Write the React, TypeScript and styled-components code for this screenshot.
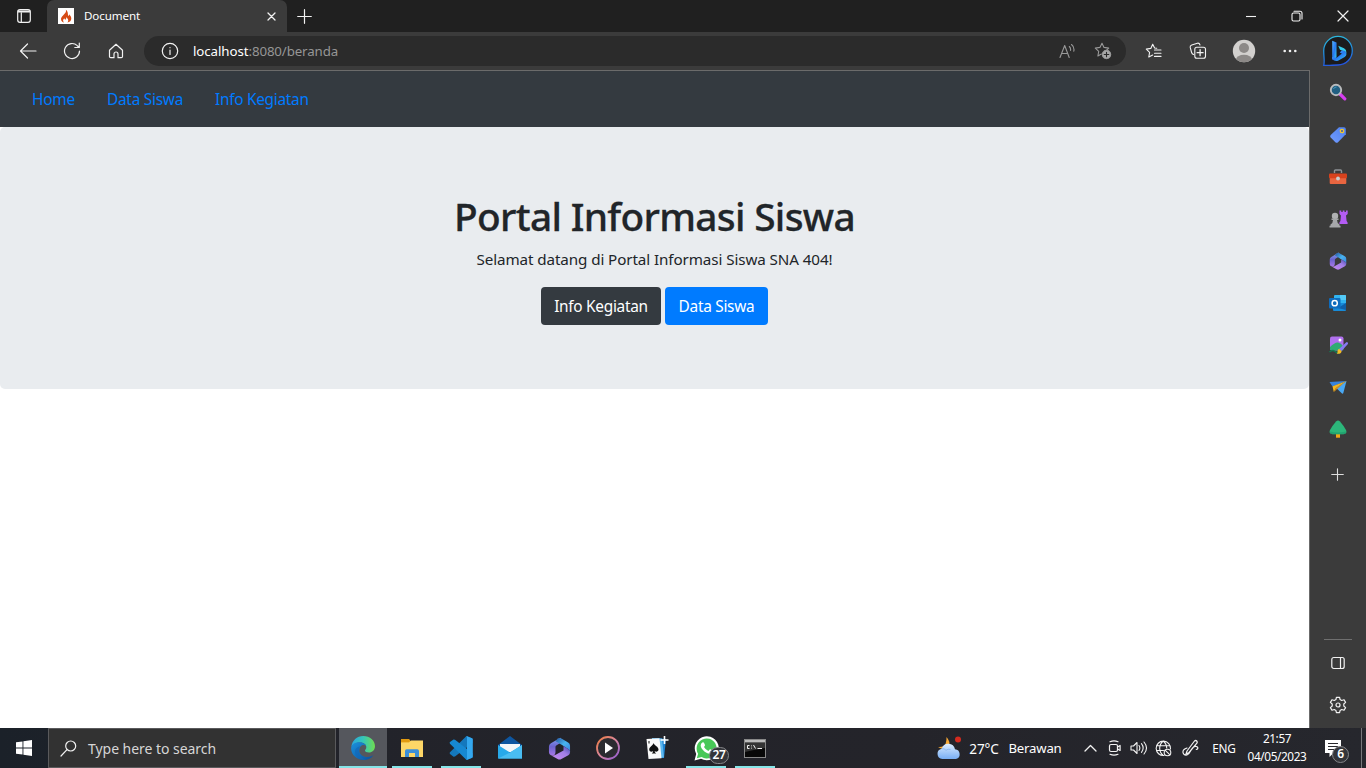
import React from 'react';
import styled, { createGlobalStyle, css } from 'styled-components';

const GlobalStyle = createGlobalStyle`
  *, *::before, *::after { box-sizing: border-box; }
  html, body { margin: 0; padding: 0; overflow: hidden; }
  body { font-family: "Noto Sans", "Open Sans", sans-serif; }
  svg { display: block; flex: none; }
`;

const Desktop = styled.div`
  width: 1366px;
  height: 768px;
  display: flex;
  flex-direction: column;
  background: #3b3b3b;
  overflow: hidden;
`;

const Label = styled.span<{ $size: number; $spacing?: number; $color?: string }>`
  font-size: ${p => p.$size}px;
  letter-spacing: ${p => p.$spacing ?? 0}px;
  color: ${p => p.$color ?? '#ffffff'};
  white-space: nowrap;
`;

/* Browser window */

const TitleBar = styled.header`
  height: 32px;
  flex: none;
  display: flex;
  align-items: center;
  background: #202020;
`;

const Slot = styled.div<{ $w: number }>`
  width: ${p => p.$w}px;
  height: 100%;
  flex: none;
  display: flex;
  align-items: center;
  justify-content: center;
`;

const Tab = styled.div`
  width: 240px;
  height: 32px;
  flex: none;
  display: flex;
  align-items: center;
  padding: 0 10px 0 11px;
  background: #3b3b3b;
  border-radius: 7px 7px 0 0;
`;

const TabTitle = styled(Label)`
  flex: 1;
  padding: 0 0 2px 10px;
`;

const Host = styled(Label)`
  margin-left: 5px;
`;

const Spacer = styled.div`
  flex: 1;
`;

const Toolbar = styled.div`
  height: 38px;
  flex: none;
  display: flex;
  align-items: center;
  padding-left: 6px;
  background: #3b3b3b;
`;

const AddressBar = styled.div`
  width: 982px;
  height: 30px;
  flex: none;
  display: flex;
  align-items: center;
  padding: 0 5px 0 8px;
  margin-left: 6px;
  border-radius: 15px;
  background: #2b2b2b;
`;

const Body = styled.div`
  height: 658px;
  flex: none;
  display: flex;
`;

const Page = styled.main`
  width: 1310px;
  flex: none;
  border-top: 1px solid #6b6b6b;
  border-right: 1px solid #6b6b6b;
  background: #ffffff;
`;

const Navbar = styled.nav`
  height: 56px;
  display: flex;
  align-items: center;
  gap: 32px;
  padding: 2px 32px 0 32px;
  background: #343a40;
`;

const NavLink = styled.a<{ $w: number; $spacing: number }>`
  width: ${p => p.$w}px;
  font-size: 15.4px;
  letter-spacing: ${p => p.$spacing}px;
  line-height: 24px;
  color: #007bff;
  white-space: nowrap;
`;

const Jumbotron = styled.section`
  height: 262px;
  display: flex;
  flex-direction: column;
  align-items: center;
  padding-top: 64px;
  border-radius: 5px;
  background: #e9ecef;
`;

const Heading = styled.h1`
  margin: 0 0 8px;
  font-size: 38.8px;
  line-height: 50px;
  height: 48px;
  font-weight: 500;
  letter-spacing: -0.68px;
  color: #212529;
  -webkit-text-stroke: 0.3px #212529;
  white-space: nowrap;
`;

const Lead = styled.p`
  margin: 0 0 16px;
  font-size: 15.2px;
  line-height: 25px;
  height: 24px;
  letter-spacing: -0.09px;
  color: #212529;
  white-space: nowrap;
`;

const Buttons = styled.div`
  display: flex;
  gap: 4px;
`;

const Button = styled.button<{ $w: number; $bg: string }>`
  width: ${p => p.$w}px;
  height: 38px;
  padding: 0;
  border: 0;
  border-radius: 4px;
  background: ${p => p.$bg};
  color: #ffffff;
  font: 400 15.4px "Noto Sans", "Open Sans", sans-serif;
  letter-spacing: -0.28px;
  white-space: nowrap;
`;

const Sidebar = styled.aside`
  width: 56px;
  flex: none;
  display: flex;
  flex-direction: column;
  align-items: center;
  padding-right: 1px;
  background: #3b3b3b;
`;

const SideItem = styled.div<{ $h?: number }>`
  height: ${p => p.$h ?? 42}px;
  flex: none;
  display: flex;
  align-items: center;
  justify-content: center;
`;

const Divider = styled.div`
  width: 28px;
  height: 1px;
  background: #6f6f6f;
  margin-bottom: 2px;
`;

/* Taskbar */

const Taskbar = styled.footer`
  height: 40px;
  flex: none;
  display: flex;
  align-items: center;
  background: linear-gradient(90deg, #1b2129 0, #22232a 340px, #24242a 900px, #26272d 100%);
`;

const SearchBox = styled.div`
  width: 288px;
  height: 40px;
  flex: none;
  display: flex;
  align-items: center;
  gap: 11px;
  padding-left: 11px;
  margin-right: 3px;
  border: 1px solid #5a5a5c;
  background: #323232;
`;

const TaskButton = styled.div<{ $open?: boolean; $active?: boolean }>`
  position: relative;
  width: 49px;
  height: 40px;
  flex: none;
  display: flex;
  align-items: center;
  justify-content: center;
  padding-right: 1px;
  ${p => p.$active && css`
    background: linear-gradient(90deg, #55575d 48px, transparent 48px);
  `}
  &::after {
    content: '';
    display: ${p => (p.$open || p.$active ? 'block' : 'none')};
    position: absolute;
    bottom: 0;
    left: ${p => (p.$active ? 0 : 4)}px;
    width: ${p => (p.$active ? 48 : 40)}px;
    height: 2px;
    background: #85e5e8;
  }
`;

const Badge = styled.span<{ $w: number; $left: number; $top: number }>`
  position: absolute;
  left: ${p => p.$left}px;
  top: ${p => p.$top}px;
  width: ${p => p.$w}px;
  height: 17px;
  border: 1px solid #85868a;
  border-radius: 9px;
  background: #34353a;
  color: #ffffff;
  font-size: 12px;
  font-weight: 600;
  letter-spacing: -0.3px;
  line-height: 14px;
  text-align: center;
`;

const Clock = styled.div`
  width: 74px;
  flex: none;
  display: flex;
  flex-direction: column;
  align-items: center;
  line-height: 18px;
  padding: 0 2px 2px 0;
`;

const Notifications = styled.div`
  position: relative;
  width: 46px;
  height: 40px;
  flex: none;
  display: flex;
  align-items: center;
  padding-left: 10px;
`;

const PeekLine = styled.div`
  width: 1px;
  height: 40px;
  background: #77787b;
  margin-right: 4px;
`;

/* Line icons share one frame; shapes use their pixel size as the view box. */
const Line = ({ w = 16, h = w, c = '#f2f2f2', s = 1.1, children }: {
  w?: number; h?: number; c?: string; s?: number; children: React.ReactNode;
}) => (
  <svg width={w} height={h} viewBox={`0 0 ${w} ${h}`} fill="none" stroke={c} strokeWidth={s}
    strokeLinecap="round" strokeLinejoin="round">{children}</svg>
);

const Art = ({ w = 18, h = w, children }: { w?: number; h?: number; children: React.ReactNode }) => (
  <svg width={w} height={h} viewBox={`0 0 ${w} ${h}`}>{children}</svg>
);

const Microsoft365 = ({ size, id }: { size: number; id: string }) => (
  <svg width={size} height={size} viewBox="0 0 24 24">
    <defs>
      <linearGradient id={`${id}a`} x1="0" y1="0" x2="0" y2="1">
        <stop offset="0" stopColor="#7fa3f2" /><stop offset=".5" stopColor="#6c63cf" /><stop offset="1" stopColor="#a678e6" />
      </linearGradient>
      <linearGradient id={`${id}b`} x1="0" y1="0" x2="1" y2="1">
        <stop offset="0" stopColor="#27549f" /><stop offset=".5" stopColor="#48b4f0" /><stop offset="1" stopColor="#3b82dd" />
      </linearGradient>
      <linearGradient id={`${id}c`} x1="0" y1="1" x2="1" y2="0">
        <stop offset="0" stopColor="#c98bf0" /><stop offset=".6" stopColor="#a27fe8" /><stop offset="1" stopColor="#3f4bab" />
      </linearGradient>
    </defs>
    <path d="M13 .8 3 6.500Q1 7.700 1 10v6q0 2.200 2 3l1.500.4q3 .2 3.300-3.400v-5.500q0-1.200 1.200-2L15 5Z" fill={`url(#${id}a)`} />
    <path d="M10 1.600q2-1.200 4 0L21 5.700q2 1.200 2 3.300v6.500q0-1.800-2-3l-4.800-3q-1-.7-2.500-1.600L8 4.500Z" fill={`url(#${id}b)`} />
    <path d="M23 14.500V16q0 2-1.800 3L14 23q-2 1.200-4 0l-6.500-3.700q2.500.5 5-1L16.200 14v-4.500L21 12.500q1.700 1 2 2Z" fill={`url(#${id}c)`} />
  </svg>
);

const EdgeLogo = () => (
  <Art w={24}>
    <defs>
      <linearGradient id="edgeTop" x1="0" y1=".4" x2="1" y2=".4">
        <stop offset="0" stopColor="#2aa5e0" /><stop offset=".5" stopColor="#35c6b8" /><stop offset="1" stopColor="#6fdd50" />
      </linearGradient>
      <linearGradient id="edgeLow" x1="0" y1="0" x2="1" y2="1">
        <stop offset="0" stopColor="#1b91dd" /><stop offset="1" stopColor="#0b4f9c" />
      </linearGradient>
    </defs>
    <path d="M.3 11C1 4.500 6 0 12.200 0 19 0 24 4.800 24 10.200c0 3.800-2.800 6.300-6 6.300-2.600 0-4-1-4-2 0-.8 1.300-1.200 1.300-3.200 0-2.500-2.300-4.700-6-4.700C5 6.600 1.500 8.500.3 11Z" fill="url(#edgeTop)" />
    <path d="M.2 11.500C.8 8 4.500 6.300 8.500 6.300c3.500 0 6.200 1.700 6.800 4-1-1-2.300-1.500-3.500-1.300-2.400.7-3.500 3-3.500 5.500 0 4 3.700 6.500 8 6.500 2.400 0 4.700-.8 6.200-2-2 3.200-5.700 5-9.800 5C5.500 24-.5 18.500.2 11.500Z" fill="url(#edgeLow)" />
    <path d="M9.300 10.500c-3.500 4.200-.5 11.800 5.700 13.200C8.500 24.500 4 20.300 4 15.500c0-2.700 2.500-5 5.300-5Z" fill="#1468b8" opacity=".7" />
  </Art>
);

const BingLogo = () => (
  <Art w={32}>
    <defs>
      <linearGradient id="ring" x1=".3" y1="0" x2=".5" y2="1">
        <stop offset="0" stopColor="#2cb9dd" /><stop offset=".55" stopColor="#2187d8" /><stop offset="1" stopColor="#2454e0" />
      </linearGradient>
      <linearGradient id="bee" x1="0" y1="0" x2="1" y2="1">
        <stop offset="0" stopColor="#55b4ff" /><stop offset=".5" stopColor="#2878f0" /><stop offset="1" stopColor="#35cdf0" />
      </linearGradient>
    </defs>
    <path d="M1.700 30.300C2.900 27 1.700 22 1.700 15.700A14.300 14.300 0 1 1 16 30c-5 0-8.500.8-14.300.3Z" fill="#1b1b1d" stroke="url(#ring)" strokeWidth="1.300" />
    <path d="m10.200 5.800 4.300 1.700v15l-4.300 2.300Z" fill="url(#bee)" />
    <path d="M16.200 10.800 22 13.300q2.600 1.300 2.500 4.700-1.200-1.700-4-2.200l-2.500-1Z" fill="#35cbea" />
    <path d="m10.200 22 4.500.7 5.200-4.200-2.200-1 2.300-2.300q4.300.5 4.500 3.700-.2 2-1.800 3L16.500 25.500q-3.700 1.700-6.300-1.500Z" fill="url(#bee)" />
  </Art>
);

const Gear = () => (
  <Line w={18} s={1.2}>
    <path d="M7.400 1.300h3.200l.5 2.300 1.600.9 2.300-.8 1.600 2.700-1.800 1.600v2l1.800 1.600-1.600 2.700-2.300-.8-1.600.9-.5 2.300H7.400l-.5-2.300-1.600-.9-2.300.8-1.600-2.700L3.200 10V8L1.400 6.400 3 3.700l2.300.8 1.600-.9Z" />
    <circle cx="9" cy="9" r="2" />
  </Line>
);

const STAR = 'M8 1.200 10 5.400l4.700.7-3.400 3.300.3 1.600M8 1.200 5.900 5.400l-4.600.7 3.400 3.300-.8 4.600 3.500-1.900';

export default function App() {
  return (
    <Desktop>
      <GlobalStyle />
      <TitleBar>
        <Slot $w={47}>
          <Line w={14} h={14} s={1.2}>
            <rect x=".7" y=".7" width="12.600" height="12.600" rx="2.300" />
            <path d="M1 2h12M1.500 3h11M4.300 4v9" />
          </Line>
        </Slot>
        <Tab>
          <Art w={16}>
            <rect width="16" height="16" fill="#fff" />
            <path d="M7.800 1.700c.8 2-.3 3-1.900 4.700C4 8.300 2.400 10 3.200 12.200c.4 1.300 1.500 2 2.800 2.200-1.500-1.500-1-3 .3-4.100.2.900.7 1.300 1.300 1.200.9-.3.300-1.500.7-2.300 1.600 1.400 2.900 3.400 1.100 5.200 2.400-.3 3.900-1.800 3.900-4 0-2-1.500-2.700-1.800-4.100-.5.600-.4 1.300-.8 1.800-1.500-1.200.1-4.400-2.900-6.400Z" fill="#d64a14" />
          </Art>
          <TabTitle $size={11.6} $spacing={-0.1}>Document</TabTitle>
          <Line w={11} s={1.3}><path d="m2 2 7 7M9 2 2 9" /></Line>
        </Tab>
        <Slot $w={34}><Line w={15} s={1.2}><path d="M7.500.7v13.600M.7 7.500h13.600" /></Line></Slot>
        <Spacer />
        <Slot $w={46}><Line w={12}><path d="M1 6.500h10" strokeLinecap="butt" /></Line></Slot>
        <Slot $w={46}>
          <Line w={12}><rect x="1" y="3" width="8" height="8" rx="1.500" /><path d="M3 1.200h6A2 2 0 0 1 11 3.200V9" /></Line>
        </Slot>
        <Slot $w={46}><Line w={12} s={1.2}><path d="m1 1 10 10M11 1 1 11" /></Line></Slot>
      </TitleBar>

      <Toolbar>
        <Slot $w={44}><Line w={18} s={1.2}><path d="M17 9H1.500M8.500 2 1.500 9l7 7" /></Line></Slot>
        <Slot $w={44}><Line w={18} s={1.2}><path d="M16.500 9a7.500 7.500 0 1 1-2.200-5.300L16 5.200M16.300 1v4.500h-4.500" /></Line></Slot>
        <Slot $w={44}>
          <Line w={16} s={1.2}><path d="M1.500 7.300 8 1.300l6.500 6v6.200q0 1.200-1.200 1.200H10V11a2 2 0 0 0-4 0v3.700H2.700q-1.200 0-1.200-1.200Z" /></Line>
        </Slot>
        <AddressBar>
          <Slot $w={36}>
            <Line w={18} s={1.2}><circle cx="9" cy="9" r="7.700" /><path d="M9 8v4.500M9 5.500v.2" /></Line>
          </Slot>
          <Host $size={13.3} $spacing={-0.08}>localhost</Host>
          <Label $size={13.3} $spacing={-0.12} $color="#969696">:8080/beranda</Label>
          <Spacer />
          <Slot $w={36}>
            <Line w={16} c="#999"><path d="m1 14.500 4.700-12 4.500 12M2.500 10.500h6.300M10.300 3.500q1.700 1.500 1.200 4M12.500 1.500q3.200 2.500 2.300 6.700" /></Line>
          </Slot>
          <Slot $w={36}>
            <Line w={18} c="#999"><path d={STAR} /><circle cx="12.500" cy="12.500" r="4.200" fill="#a8a8a8" /><path d="M12.500 10.200v4.600M10.200 12.500h4.600" stroke="#2b2b2b" /></Line>
          </Slot>
        </AddressBar>
        <Slot $w={5} />
        <Slot $w={44}>
          <Line w={17}><path d="M7.700 1.200 9.600 5l2.200.3M7.700 1.200 5.800 5.400l-4.500.7 3.300 3.300-.8 4.600 3.900-2M9.500 7H16M9.500 10.200H16M9.500 13.400H16" /></Line>
        </Slot>
        <Slot $w={46}>
          <Line w={18}><path d="M4.500 12.500A3 3 0 0 1 2.600 10.500L1.200 5.400Q.8 3.500 2.700 2.900L8.400 1.200Q10.300.8 11 3" /><rect x="5.800" y="5.200" width="10.700" height="11" rx="2" /><path d="M11.100 7.700v6M8.100 10.700h6" strokeWidth="1.300" /></Line>
        </Slot>
        <Slot $w={46}>
          <Art w={24}>
            <defs><clipPath id="face"><circle cx="12" cy="12" r="11.200" /></clipPath></defs>
            <circle cx="12" cy="12" r="11.200" fill="#d2d0ce" />
            <g clipPath="url(#face)" fill="#8c8987"><circle cx="12" cy="9" r="5" /><ellipse cx="12" cy="20.500" rx="8" ry="4.700" /></g>
          </Art>
        </Slot>
        <Slot $w={46}>
          <Art w={14}><g fill="#f2f2f2"><circle cx="1.700" cy="7" r="1.300" /><circle cx="7" cy="7" r="1.300" /><circle cx="12.300" cy="7" r="1.300" /></g></Art>
        </Slot>
        <Slot $w={50}><BingLogo /></Slot>
      </Toolbar>

      <Body>
        <Page>
          <Navbar>
            <NavLink $w={43} $spacing={-0.2}>Home</NavLink>
            <NavLink $w={76} $spacing={-0.25}>Data Siswa</NavLink>
            <NavLink $w={94} $spacing={-0.28}>Info Kegiatan</NavLink>
          </Navbar>
          <Jumbotron>
            <Heading>Portal Informasi Siswa</Heading>
            <Lead>Selamat datang di Portal Informasi Siswa SNA 404!</Lead>
            <Buttons>
              <Button $w={120} $bg="#343a40">Info Kegiatan</Button>
              <Button $w={103} $bg="#007bff">Data Siswa</Button>
            </Buttons>
          </Jumbotron>
        </Page>
        <Sidebar>
          <SideItem $h={44}>
            <Art><path d="m11 11 4.800 4.800" stroke="#d63df0" strokeWidth="3.200" strokeLinecap="round" /><circle cx="7" cy="7" r="5.200" fill="#215f82" stroke="#b9bbbd" strokeWidth="1.900" /><path d="M4.500 6a3 3 0 0 1 3-2" stroke="#4c9cc0" fill="none" /></Art>
          </SideItem>
          <SideItem>
            <Art>
              <defs><linearGradient id="tag" x1="1" y1="0" x2="0" y2="1"><stop offset="0" stopColor="#4e80ee" /><stop offset="1" stopColor="#729cff" /></linearGradient></defs>
              <path d="M10 1.200h5q1.800 0 1.800 1.800v5.200L9 16.200q-1.300 1.200-2.600 0L1.700 11.500q-1.200-1.300 0-2.500Z" fill="url(#tag)" /><circle cx="13" cy="5" r="1.700" fill="#4a5ea0" stroke="#f1c72e" strokeWidth="1.300" />
            </Art>
          </SideItem>
          <SideItem>
            <Art><path d="M5.500 5V3q0-1 1-1h5q1 0 1 1v2" fill="none" stroke="#8e9396" strokeWidth="1.400" /><rect x=".7" y="9" width="16.600" height="7" rx="1" fill="#e86540" /><rect x="0" y="5.500" width="18" height="4.700" rx="1" fill="#d7421d" /><circle cx="9" cy="10.500" r="1.900" fill="#c8ced0" /></Art>
          </SideItem>
          <SideItem>
            <Art w={20} h={20}><path d="M11.500 1.500h1.800V3h1.400V1.500h1.800V3h1.400V1.500h1.800V5L18 6.500l.6 5.500 1 1.500V15h-8.200v-1.500l1-1.500.5-5.500-1.400-1.500Z" fill="#b45cf4" /><circle cx="7" cy="7" r="3.200" fill="#b0b1b3" /><path d="M3.500 9.500h7v1.400H9q0 3 2.500 4.600v1.200h1v1.900h-11v-1.900h1v-1.200Q5 14 5 10.900H3.500Z" fill="#a6a7aa" /></Art>
          </SideItem>
          <SideItem><Microsoft365 size={18} id="side" /></SideItem>
          <SideItem>
            <Art><rect x="5" y="1" width="12" height="9" rx="1" fill="#31b4f1" /><path d="M11 1h5q1 0 1 1v4h-6Z" fill="#53caf7" /><path d="M4 9h13v7q0 1-1 1H5q-1 0-1-1Z" fill="#178bd8" /><path d="m9 14 8-5v7Z" fill="#0f5fa8" /><rect x="0" y="4" width="11.500" height="10.500" rx="1" fill="#0f6cbd" /><circle cx="5.700" cy="9.200" r="2.600" stroke="#fff" strokeWidth="1.500" fill="none" /></Art>
          </SideItem>
          <SideItem>
            <Art w={20} h={20}><rect x="2" y="1.500" width="13.500" height="14" rx="2" fill="#b070ee" /><path d="M2 12q5-5 8-4.500 3 .5 5.500 4V14q0 1.500-2 1.500H4Q2 15.500 2 13.500Z" fill="#2fac73" /><circle cx="12" cy="5" r="1.500" fill="#fff" /><path d="M1.500 17q3-2.500 5-1t4 2.500" stroke="#137b54" strokeWidth="1.400" fill="none" /><path d="m11 14 7-6.500q1-.8 1.700 0t0 1.800L13.500 16Z" fill="#877af3" /><path d="m11 13.700 2.700 2.500q-.5 3-5 2.500 1.200-.8.8-2.500.1-1.800 1.500-2.500Z" fill="#f4bd25" /></Art>
          </SideItem>
          <SideItem>
            <Art><path d="M.5 4 17.500 3 3.500 8.500Z" fill="#3683dc" /><path d="M17.500 3 3.500 8.300 4.800 14l2.200-4Z" fill="#f6b61d" /><path d="M17.500 3 7 9.700l6 5.800q1 .5 1.400-.7Z" fill="#49a8f3" /><path d="M17.500 3 7 9.700 5 14 8 11Z" fill="#d98d15" /></Art>
          </SideItem>
          <SideItem>
            <Art><rect x="7" y="13" width="4" height="4.700" fill="#f3a615" /><path d="M7 1.500Q9-.7 11 1.500q3.500 4 6 8.500 1.500 3.800-2.500 4.200h-11Q-.5 13.800 1 10 3.500 5.500 7 1.500Z" fill="#2cb67a" /><path d="M1 11.500q7 2 16 0 .2 2.500-2.500 2.700h-11Q.8 14 1 11.500Z" fill="#159165" opacity=".5" /></Art>
          </SideItem>
          <SideItem $h={49}><Line w={13} c="#dedede"><path d="M6.500.7v11.600M.7 6.500h11.600" /></Line></SideItem>
          <Spacer />
          <Divider />
          <SideItem><Line w={14} s={1.2}><rect x=".8" y="1.500" width="12.400" height="11" rx="2" /><path d="M9.500 1.500v11" /></Line></SideItem>
          <SideItem><Gear /></SideItem>
          <SideItem $h={2} />
        </Sidebar>
      </Body>

      <Taskbar>
        <Slot $w={48}>
          <Art w={16}><path d="M0 2.300 6.500 1.400v6.100H0ZM7.400 1.300 16 0v7.500H7.400ZM0 8.500h6.500v6.100L0 13.700ZM7.400 8.500H16V16l-8.600-1.200Z" fill="#fff" /></Art>
        </Slot>
        <SearchBox>
          <Line w={17} s={1.2}><circle cx="10.700" cy="6" r="5" /><path d="M7 9.700 1 16" /></Line>
          <Label $size={14} $spacing={-0.04} $color="#d6d6d6">Type here to search</Label>
        </SearchBox>
        <TaskButton $active><EdgeLogo /></TaskButton>
        <TaskButton $open>
          <Art w={22} h={18}><path d="M0 0h8l1.500 2H22v16H0Z" fill="#e9a820" /><path d="M0 3.500h8L10 1.500h12V18H0Z" fill="#fdd667" /><path d="M0 0h7.500l1.500 1.500-1 1.500H0Z" fill="#e29a10" /><path d="M4 18v-6q0-1.700 1.700-1.700h10.600q1.700 0 1.700 1.700v6h-4v-4H8v4Z" fill="#3c8fd8" /></Art>
        </TaskButton>
        <TaskButton $open>
          <Art w={24}><path d="m17.500 0 6 2.500V7L6 20.500l-1.500.2L1 18q-.8-1 0-1.700Z" fill="#1478bd" /><path d="M1 6 4.500 3.500 6 3.700l17.500 13.500v4.500L17.500 24 1 7.700Q.2 6.800 1 6Z" fill="#1688d2" /><path d="m17.500 0 5.500 2.300q.8.400.8 1.200v17q0 .8-.8 1.200L17.500 24q.5-1 .5-2V2q0-1-.5-2Z" fill="#34a8ef" /></Art>
        </TaskButton>
        <TaskButton>
          <Art w={24}><path d="M0 9 12 0l12 9v5H0Z" fill="#0e56a0" /><path d="M2 8h20v8H2Z" fill="#f4f6f8" /><path d="m0 9 12 7.500L24 9v13.500H0Z" fill="#27a9ea" /><path d="m0 22.500 12-6L24 9v13.500Z" fill="#49bdf2" /></Art>
        </TaskButton>
        <TaskButton><Microsoft365 size={23} id="task" /></TaskButton>
        <TaskButton>
          <Art w={24}>
            <defs><linearGradient id="media" x1="0" y1="0" x2="1" y2="1"><stop offset="0" stopColor="#ee7b3d" /><stop offset=".5" stopColor="#d988a0" /><stop offset="1" stopColor="#8d58d6" /></linearGradient></defs>
            <circle cx="12" cy="12" r="11" fill="#2b2b30" stroke="url(#media)" strokeWidth="1.800" /><path d="m9 6.500 8 5.500-8 5.500Z" fill="#fff" />
          </Art>
        </TaskButton>
        <TaskButton>
          <Art w={24}><path d="m10 2 11 1-2 19H9Z" fill="#1d83d2" /><path d="m7 2 10 .5 2 19H8Z" fill="#5db7ee" /><path d="m1.500 3 13-.8 2 20-13 .8Z" fill="#fafafa" /><path d="M8.500 7c1 2.500 5 3.700 5 6.500 0 2.200-2.700 2.700-3.900 1.500q.2 1.700 1.600 2.500H6.800q1.200-1 1.400-2.500c-1.300 1.500-4 .7-4-1.500C4.200 11 8 9.500 8.500 7Z" fill="#111" /><path d="M19.500 0v8M15.500 4h8" stroke="#fff" strokeWidth="1.600" /><path d="M4 5v2.500" stroke="#111" /></Art>
        </TaskButton>
        <TaskButton $open>
          <Art w={25}><path d="M.5 24.500 2.200 18A12 12 0 1 1 7 22.800Z" fill="#fff" /><path d="m2.800 22.200 1.300-4.500a10 10 0 1 1 3.500 3.400Z" fill="#48c858" /><path d="M8.300 6.500q1-.7 1.700.3l1 2.300q.2.600-1 1.800 1.500 2.800 4.400 4l1.300-1.500q.5-.3 3.100 1.200.3 2-1.600 2.900-2.500 1.200-6.500-1.800-4-3.200-4-6.200 0-1.900 1.600-3Z" fill="#fff" /></Art>
          <Badge $w={20} $left={27} $top={19}>27</Badge>
        </TaskButton>
        <TaskButton $open>
          <Art w={22} h={19}><rect x=".5" y=".5" width="21" height="18" fill="#080808" stroke="#888" /><rect x="1" y="1" width="20" height="2.500" fill="#bcbcbc" /><path d="m1 4 20 0v5q-8 1-20 4Z" fill="#343434" /><path d="M5.500 6.500H3.500v3h2M7.500 6.500v.8M7.500 8.700v.8M9.500 6l2 3.500M13.500 9.500H18" stroke="#f2f2f2" fill="none" /></Art>
        </TaskButton>
        <Spacer />
        <Slot $w={32}>
          <Art w={26} h={24}>
            <defs><linearGradient id="cloud" x1="0" y1="0" x2="0" y2="1"><stop offset="0" stopColor="#dcecff" /><stop offset="1" stopColor="#78aef4" /></linearGradient></defs>
            <path d="M10.500 1q4.500 5 2.200 9.500Q9 15 2 11q6 .5 7.700-3.500 1-3 .8-6.500Z" fill="#f7a936" /><circle cx="22" cy="3.500" r="3" fill="#d42b1f" />
            <path d="M6.300 23a5.200 5.200 0 0 1-.5-10.300A6.800 6.800 0 0 1 19 13.200 5 5 0 0 1 20 23Z" fill="url(#cloud)" /><path d="M5.800 12.700q2.500-.3 4.200 1.500 2-1.500 4.500-.7" stroke="#8eb9ef" fill="none" />
          </Art>
        </Slot>
        <Slot $w={38}><Label $size={13.6} $spacing={-0.1}>27°C</Label></Slot>
        <Slot $w={64}><Label $size={13.2} $spacing={-0.2}>Berawan</Label></Slot>
        <Slot $w={12} />
        <Slot $w={22}><Line w={13} h={8} s={1.3}><path d="m1 7 5.500-5.500L12 7" /></Line></Slot>
        <Slot $w={26}><Line w={14} h={16} s={1.2}><rect x="2.500" y="4.500" width="8" height="7" rx="1.500" /><path d="m10.500 7 2.600-1.500v5L10.500 9M3 1.700q4-1.700 8 0M3 14.300q4 1.700 8 0" /></Line></Slot>
        <Slot $w={24}><Line w={18} h={14}><path d="M1 5v4h2.500L7 12.500v-11L3.500 5ZM9 4.500q1.700 2.500 0 5M11.500 2.700q3.300 4.300 0 8.600M14 1q5 6 0 12" /></Line></Slot>
        <Slot $w={24}><Line w={17}><path d="M9 15.500A7.200 7.200 0 1 1 15.500 9M1.500 5.700h13M1.500 10.500h7M8.200 1q-3.500 3-3.500 7.200t3.500 7.200M8.200 1q3.500 3 3.500 7" /><circle cx="12.500" cy="12.500" r="3.300" /><path d="m10.300 10.300 4.400 4.400" /></Line></Slot>
        <Slot $w={32}><Line w={18} s={1.2}><path d="m5 12 7.500-10q1.300-1 2.200 0t.2 2.200L7 13.500 4 15ZM5 9Q.5 10.500 1 13.500t4 2.500c4-1 3.500-8 8-8.500q2.500-.2 2.800 1.200t-1.500 1.800" /></Line></Slot>
        <Slot $w={34}><Label $size={11.8} $spacing={-0.2}>ENG</Label></Slot>
        <Clock>
          <Label $size={11.8} $spacing={-0.4}>21:57</Label>
          <Label $size={11.8} $spacing={-0.4}>04/05/2023</Label>
        </Clock>
        <Notifications>
          <Art w={17} h={18}><path d="M0 1h16v13H8.500l-4 4v-4H0Z" fill="#fff" /><path d="M3 4.500h10M3 7.500h10M3 10.500h7" stroke="#29292e" /></Art>
          <Badge $w={17} $left={17} $top={18}>6</Badge>
        </Notifications>
        <PeekLine />
      </Taskbar>
    </Desktop>
  );
}
